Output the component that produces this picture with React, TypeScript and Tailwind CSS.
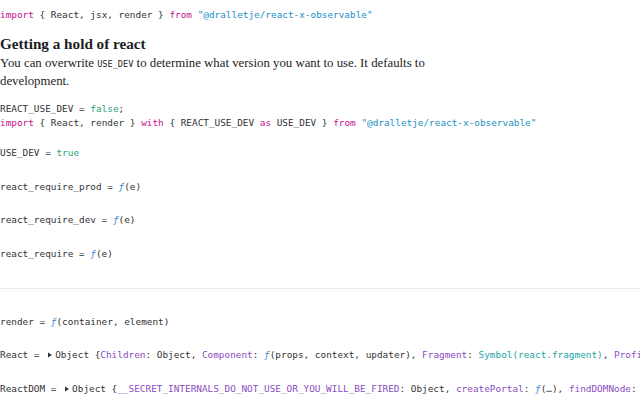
import React from "react";

const mono = "font-['DejaVu_Sans_Mono','Liberation_Mono',monospace] text-[9.4px] leading-[14px] text-[#333] whitespace-nowrap";

function Kw({ children }: { children: React.ReactNode }) {
  return <span className="text-[#c8118c]">{children}</span>;
}
function Str({ children }: { children: React.ReactNode }) {
  return <span className="text-[#1c8fc4]">{children}</span>;
}
function Lit({ children }: { children: React.ReactNode }) {
  return <span className="text-[#1ea17d]">{children}</span>;
}
function Fn() {
  return <span className="text-[#3a8bd0] italic">ƒ</span>;
}
function Key({ children }: { children: React.ReactNode }) {
  return <span className="text-[#8a4dc2]">{children}</span>;
}
function Sym({ children }: { children: React.ReactNode }) {
  return <span className="text-[#1aa5a5]">{children}</span>;
}
function Caret() {
  return (
    <svg width="6" height="6" viewBox="0 0 6 6" className="mx-[2px] inline-block align-[0px]">
      <path d="M1 0.5 L5 3 L1 5.5 Z" fill="#333" />
    </svg>
  );
}

export default function App() {
  return (
    <div className="h-[400px] w-[640px] overflow-hidden bg-white">
      <div className="flex flex-col pt-[8px]">
        {/* import cell */}
        <div className={mono}>
          <Kw>import</Kw> {"{"} React, jsx, render {"}"} <Kw>from</Kw> <Str>"@dralletje/react-x-observable"</Str>
        </div>

        {/* markdown cell */}
        <div className="mt-[13px] font-['Liberation_Serif',serif] text-[#1b1e23]">
          <h2 className="text-[15.2px] leading-[18px] font-bold">Getting a hold of react</h2>
          <p className="mt-[2px] max-w-[440px] text-[12.8px] leading-[17px]">
            You can overwrite{" "}
            <code className="font-['DejaVu_Sans_Mono',monospace] text-[8.6px]">USE_DEV</code> to determine what
            version you want to use. It defaults to
            <br />
            development.
          </p>
        </div>

        <div className={`mt-[12px] ${mono}`}>
          REACT_USE_DEV = <Lit>false</Lit>;
          <br />
          <Kw>import</Kw> {"{"} React, render {"}"} <Kw>with</Kw> {"{"} REACT_USE_DEV <Kw>as</Kw> USE_DEV {"}"}{" "}
          <Kw>from</Kw> <Str>"@dralletje/react-x-observable"</Str>
        </div>

        <div className={`mt-[16px] ${mono}`}>
          USE_DEV = <Lit>true</Lit>
        </div>

        <div className={`mt-[20px] ${mono}`}>
          react_require_prod = <Fn />(e)
        </div>

        <div className={`mt-[19px] ${mono}`}>
          react_require_dev = <Fn />(e)
        </div>

        <div className={`mt-[20px] ${mono}`}>
          react_require = <Fn />(e)
        </div>

        {/* divider */}
        <div className="mt-[27px] border-t border-[#ececec]" />
        <div className="h-[3px] bg-[#fbfbfb]" />

        <div className={`mt-[23px] ${mono}`}>
          render = <Fn />(container, element)
        </div>

        <div className={`mt-[19px] ${mono}`}>
          React = <Caret />Object {"{"}<Key>Children</Key>: Object, <Key>Component</Key>: <Fn />(props, context, updater),{" "}
          <Key>Fragment</Key>: <Sym>Symbol(react.fragment)</Sym>, <Key>Profiler</Key>: <Sym>Symbol(react.profiler)</Sym>
        </div>

        <div className={`mt-[20px] ${mono}`}>
          ReactDOM = <Caret />Object {"{"}<Key>__SECRET_INTERNALS_DO_NOT_USE_OR_YOU_WILL_BE_FIRED</Key>: Object,{" "}
          <Key>createPortal</Key>: <Fn />(…), <Key>findDOMNode</Key>: <Fn />(…)
        </div>
      </div>
    </div>
  );
}
